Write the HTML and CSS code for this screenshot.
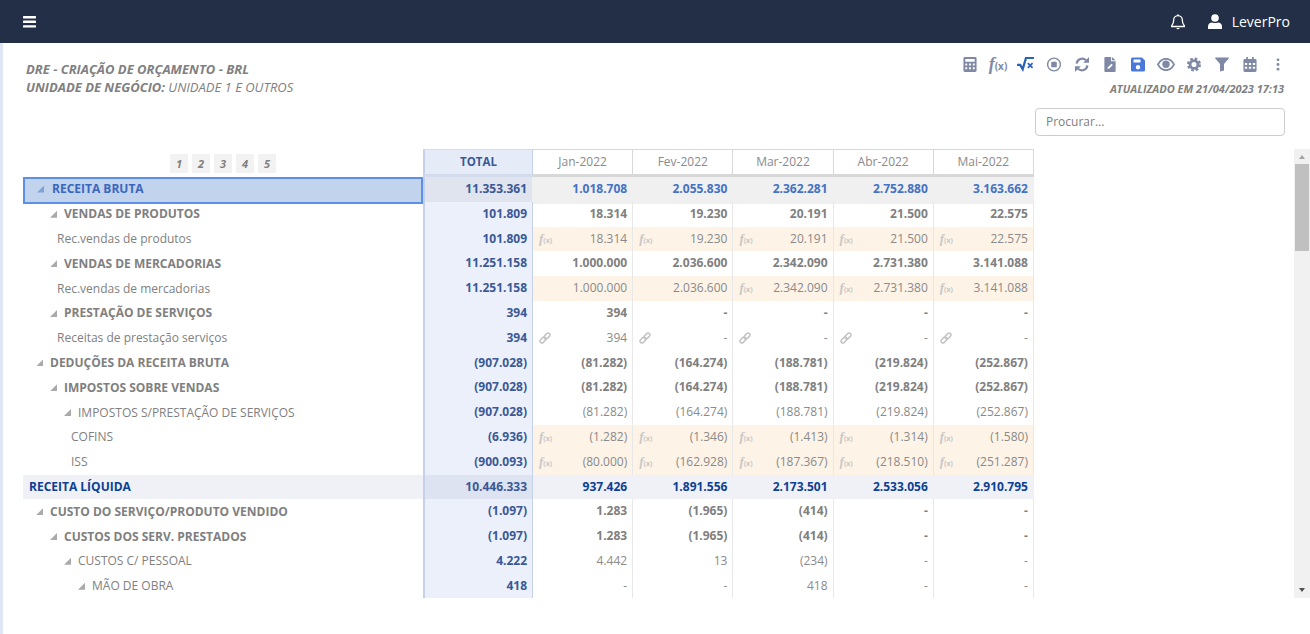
FILE: index.html
```html
<!DOCTYPE html>
<html lang="pt-BR">
<head>
<meta charset="utf-8">
<title>DRE - Criação de orçamento</title>
<link rel="stylesheet" href="styles.css">
</head>
<body>
<header class="topbar">
  <svg class="menu" viewBox="0 0 14 12" width="14" height="12"><g fill="#fff"><rect y="0" width="13" height="2.4" rx=".6"/><rect y="4.6" width="13" height="2.4" rx=".6"/><rect y="9.2" width="13" height="2.4" rx=".6"/></g></svg>
  <div class="top-right">
    <svg class="bell" viewBox="0 0 14 16" width="14" height="16"><path d="M7 1.6c-2.6 0-4.3 2-4.3 4.4 0 3.4-1.2 4.6-2 5.6v.9h12.6v-.9c-.8-1-2-2.2-2-5.6C11.3 3.600 9.600 1.600 7 1.600z" fill="none" stroke="#fff" stroke-width="1.3"/><path d="M5.300 14a1.800 1.800 0 0 0 3.400 0z" fill="#fff"/><rect x="6.200" y=".2" width="1.600" height="2" rx=".8" fill="#fff"/></svg>
    <svg class="user" viewBox="0 0 14 15" width="14" height="15"><circle cx="7" cy="4" r="3.800" fill="#fff"/><path d="M0 15v-2.500C0 9.800 2 8.400 4 8.400c1 .5 2 .7 3 .7s2-.2 3-.7c2 0 4 1.400 4 4.100V15z" fill="#fff"/></svg>
    <span class="username">LeverPro</span>
  </div>
</header>
<main class="page">
  <section class="head">
    <div class="titles">
      <div class="title-line"><b>DRE - CRIAÇÃO DE ORÇAMENTO - BRL</b></div>
      <div class="title-line"><b>UNIDADE DE NEGÓCIO:</b> UNIDADE 1 E OUTROS</div>
    </div>
    <div class="tools">
      <div class="icons">
        <svg class="ico" viewBox="0 0 14 16"><path fill-rule="evenodd" d="M1.500 0h11A1.500 1.500 0 0 1 14 1.500v13a1.500 1.500 0 0 1-1.500 1.500h-11A1.500 1.500 0 0 1 0 14.500v-13A1.500 1.500 0 0 1 1.500 0zM2 2v3h10V2zM2 7v2h2V7zm4 0v2h2V7zm4 0v2h2V7zM2 11v2h2v-2zm4 0v2h2v-2zm4 0v2h2v-2z"/></svg>
        <span class="fx-tool">f<small>(x)</small></span>
        <svg class="ico wide blue" viewBox="0 0 19 16"><path d="M0 8.500h3.300l2.700 4.500L9.500 1H18" fill="none" stroke="#2a62b8" stroke-width="2.400"/><path d="M11.500 6.500l5 5m0-5l-5 5" stroke="#2a62b8" stroke-width="1.800"/></svg>
        <svg class="ico wide" viewBox="0 0 16 16"><circle cx="8" cy="8" r="6.800" fill="none" stroke-width="1.500" stroke="#7f88a5"/><rect x="5" y="5" width="6" height="6" rx="1"/></svg>
        <svg class="ico wide" viewBox="0 0 16 16"><path d="M2.300 7A5.800 5.800 0 0 1 12.300 3.600M13.700 9A5.800 5.800 0 0 1 3.700 12.400" fill="none" stroke="#7f88a5" stroke-width="2.300"/><path d="M15.500 0v6.200H9.300zM.5 16V9.800h6.200z"/></svg>
        <svg class="ico" viewBox="0 0 12 16"><path d="M0 1a1 1 0 0 1 1-1h6v4.500h5V15a1 1 0 0 1-1 1H1a1 1 0 0 1-1-1z"/><path d="M8 0l4 3.500H8z"/><path d="M3.300 12.800l.5-2 3.700-3.700 1.500 1.500-3.700 3.700z" fill="#fff"/></svg>
        <svg class="ico" viewBox="0 0 14 14"><path fill="#4a78db" fill-rule="evenodd" d="M1.500 0H11l3 3v9.500a1.500 1.500 0 0 1-1.500 1.500h-11A1.500 1.500 0 0 1 0 12.500v-11A1.500 1.500 0 0 1 1.500 0zM2.500 2v3h7V2zM7 7.500a2.200 2.200 0 1 0 0 4.400 2.200 2.200 0 0 0 0-4.400z"/></svg>
        <svg class="ico wide" viewBox="0 0 18 13"><path fill-rule="evenodd" d="M9 0c4 0 7.300 2.700 9 6.500-1.700 3.800-5 6.500-9 6.500S1.700 10.300 0 6.500C1.700 2.700 5 0 9 0zm0 1.800C6 1.800 3.500 3.600 2 6.500c1.500 2.900 4 4.700 7 4.700s5.500-1.800 7-4.700c-1.500-2.900-4-4.700-7-4.700z"/><circle cx="9" cy="6.300" r="3.700"/></svg>
        <svg class="ico" viewBox="0 0 16 16"><circle cx="8" cy="8" r="4.500" fill="none" stroke="#7f88a5" stroke-width="3.200"/><circle cx="8" cy="8" r="6.700" fill="none" stroke="#7f88a5" stroke-width="2.600" stroke-dasharray="3 2.260"/></svg>
        <svg class="ico" viewBox="0 0 14 14"><path d="M.5 0h13a.5.500 0 0 1 .4.800L9 6.500V13l-4 1V6.500L.1.800A.5.500 0 0 1 .5 0z"/></svg>
        <svg class="ico" viewBox="0 0 14 16"><path fill-rule="evenodd" d="M3 0h1.800v2h4.400V0H11v2h1.500A1.500 1.500 0 0 1 14 3.500v11a1.500 1.500 0 0 1-1.500 1.500h-11A1.500 1.500 0 0 1 0 14.500v-11A1.500 1.500 0 0 1 1.500 2H3zM1.500 6.500v2h2.500v-2zm4.300 0v2h2.400v-2zm4.200 0v2h2.500v-2zM1.500 10.500v2h2.500v-2zm4.300 0v2h2.400v-2zm4.200 0v2h2.500v-2z"/></svg>
        <svg class="ico dots" viewBox="0 0 4 14"><circle cx="2" cy="2" r="1.500"/><circle cx="2" cy="7" r="1.500"/><circle cx="2" cy="12" r="1.500"/></svg>
      </div>
      <div class="updated">ATUALIZADO EM 21/04/2023 17:13</div>
    </div>
  </section>
  <div class="search-row"><input class="search" type="text" placeholder="Procurar..."></div>
  <section class="report">
    <div class="sheet">
      <div class="row row-head">
        <div class="levels"><span class="lvl">1</span><span class="lvl">2</span><span class="lvl">3</span><span class="lvl">4</span><span class="lvl">5</span></div>
        <div class="cell total">TOTAL</div>
        <div class="cell month">Jan-2022</div><div class="cell month">Fev-2022</div><div class="cell month">Mar-2022</div><div class="cell month">Abr-2022</div><div class="cell month">Mai-2022</div>
      </div>
      <div class="rows">
        <div class="row bold row-first">
          <div class="label sel i1"><i class="arrow"></i>RECEITA BRUTA</div>
          <div class="cell total">11.353.361</div><div class="cell">1.018.708</div><div class="cell">2.055.830</div><div class="cell">2.362.281</div><div class="cell">2.752.880</div><div class="cell">3.163.662</div>
        </div>
        <div class="row bold">
          <div class="label i2"><i class="arrow"></i>VENDAS DE PRODUTOS</div>
          <div class="cell total">101.809</div><div class="cell">18.314</div><div class="cell">19.230</div><div class="cell">20.191</div><div class="cell">21.500</div><div class="cell">22.575</div>
        </div>
        <div class="row">
          <div class="label leaf1">Rec.vendas de produtos</div>
          <div class="cell total">101.809</div><div class="cell inp"><span class="fx">f<small>(x)</small></span>18.314</div><div class="cell inp"><span class="fx">f<small>(x)</small></span>19.230</div><div class="cell inp"><span class="fx">f<small>(x)</small></span>20.191</div><div class="cell inp"><span class="fx">f<small>(x)</small></span>21.500</div><div class="cell inp"><span class="fx">f<small>(x)</small></span>22.575</div>
        </div>
        <div class="row bold">
          <div class="label i2"><i class="arrow"></i>VENDAS DE MERCADORIAS</div>
          <div class="cell total">11.251.158</div><div class="cell">1.000.000</div><div class="cell">2.036.600</div><div class="cell">2.342.090</div><div class="cell">2.731.380</div><div class="cell">3.141.088</div>
        </div>
        <div class="row">
          <div class="label leaf1">Rec.vendas de mercadorias</div>
          <div class="cell total">11.251.158</div><div class="cell inp">1.000.000</div><div class="cell inp">2.036.600</div><div class="cell inp"><span class="fx">f<small>(x)</small></span>2.342.090</div><div class="cell inp"><span class="fx">f<small>(x)</small></span>2.731.380</div><div class="cell inp"><span class="fx">f<small>(x)</small></span>3.141.088</div>
        </div>
        <div class="row bold">
          <div class="label i2"><i class="arrow"></i>PRESTAÇÃO DE SERVIÇOS</div>
          <div class="cell total">394</div><div class="cell">394</div><div class="cell">-</div><div class="cell">-</div><div class="cell">-</div><div class="cell">-</div>
        </div>
        <div class="row">
          <div class="label leaf1">Receitas de prestação serviços</div>
          <div class="cell total">394</div>
          <div class="cell"><svg class="link" viewBox="0 0 12 12"><use href="#chain"/></svg>394</div>
          <div class="cell"><svg class="link" viewBox="0 0 12 12"><use href="#chain"/></svg>-</div>
          <div class="cell"><svg class="link" viewBox="0 0 12 12"><use href="#chain"/></svg>-</div>
          <div class="cell"><svg class="link" viewBox="0 0 12 12"><use href="#chain"/></svg>-</div>
          <div class="cell"><svg class="link" viewBox="0 0 12 12"><use href="#chain"/></svg>-</div>
        </div>
        <div class="row bold">
          <div class="label i1b"><i class="arrow"></i>DEDUÇÕES DA RECEITA BRUTA</div>
          <div class="cell total">(907.028)</div><div class="cell">(81.282)</div><div class="cell">(164.274)</div><div class="cell">(188.781)</div><div class="cell">(219.824)</div><div class="cell">(252.867)</div>
        </div>
        <div class="row bold">
          <div class="label i2"><i class="arrow"></i>IMPOSTOS SOBRE VENDAS</div>
          <div class="cell total">(907.028)</div><div class="cell">(81.282)</div><div class="cell">(164.274)</div><div class="cell">(188.781)</div><div class="cell">(219.824)</div><div class="cell">(252.867)</div>
        </div>
        <div class="row">
          <div class="label i3"><i class="arrow"></i>IMPOSTOS S/PRESTAÇÃO DE SERVIÇOS</div>
          <div class="cell total">(907.028)</div><div class="cell">(81.282)</div><div class="cell">(164.274)</div><div class="cell">(188.781)</div><div class="cell">(219.824)</div><div class="cell">(252.867)</div>
        </div>
        <div class="row">
          <div class="label leaf2">COFINS</div>
          <div class="cell total">(6.936)</div><div class="cell inp"><span class="fx">f<small>(x)</small></span>(1.282)</div><div class="cell inp"><span class="fx">f<small>(x)</small></span>(1.346)</div><div class="cell inp"><span class="fx">f<small>(x)</small></span>(1.413)</div><div class="cell inp"><span class="fx">f<small>(x)</small></span>(1.314)</div><div class="cell inp"><span class="fx">f<small>(x)</small></span>(1.580)</div>
        </div>
        <div class="row">
          <div class="label leaf2">ISS</div>
          <div class="cell total">(900.093)</div><div class="cell inp"><span class="fx">f<small>(x)</small></span>(80.000)</div><div class="cell inp"><span class="fx">f<small>(x)</small></span>(162.928)</div><div class="cell inp"><span class="fx">f<small>(x)</small></span>(187.367)</div><div class="cell inp"><span class="fx">f<small>(x)</small></span>(218.510)</div><div class="cell inp"><span class="fx">f<small>(x)</small></span>(251.287)</div>
        </div>
        <div class="row bold row-sum">
          <div class="label i0">RECEITA LÍQUIDA</div>
          <div class="cell total">10.446.333</div><div class="cell">937.426</div><div class="cell">1.891.556</div><div class="cell">2.173.501</div><div class="cell">2.533.056</div><div class="cell">2.910.795</div>
        </div>
        <div class="row bold">
          <div class="label i1b"><i class="arrow"></i>CUSTO DO SERVIÇO/PRODUTO VENDIDO</div>
          <div class="cell total">(1.097)</div><div class="cell">1.283</div><div class="cell">(1.965)</div><div class="cell">(414)</div><div class="cell">-</div><div class="cell">-</div>
        </div>
        <div class="row bold">
          <div class="label i2"><i class="arrow"></i>CUSTOS DOS SERV. PRESTADOS</div>
          <div class="cell total">(1.097)</div><div class="cell">1.283</div><div class="cell">(1.965)</div><div class="cell">(414)</div><div class="cell">-</div><div class="cell">-</div>
        </div>
        <div class="row">
          <div class="label i3"><i class="arrow"></i>CUSTOS C/ PESSOAL</div>
          <div class="cell total">4.222</div><div class="cell">4.442</div><div class="cell">13</div><div class="cell">(234)</div><div class="cell">-</div><div class="cell">-</div>
        </div>
        <div class="row">
          <div class="label i4"><i class="arrow"></i>MÃO DE OBRA</div>
          <div class="cell total">418</div><div class="cell">-</div><div class="cell">-</div><div class="cell">418</div><div class="cell">-</div><div class="cell">-</div>
        </div>
      </div>
    </div>
    <div class="scrollbar">
      <span class="arrow-up"></span>
      <span class="thumb"></span>
      <span class="track"></span>
      <span class="arrow-down"></span>
    </div>
  </section>
</main>
<svg class="defs" width="0" height="0"><defs><g id="chain" fill="none" stroke="#c4c4c4" stroke-width="1.500"><rect x="-3.400" y="-1.900" width="6.800" height="3.800" rx="1.900" transform="translate(4 8) rotate(-45)"/><rect x="-3.400" y="-1.900" width="6.800" height="3.800" rx="1.900" transform="translate(8 4) rotate(-45)"/></g></defs></svg>
</body>
</html>
```
FILE: styles.css
```css
* { box-sizing: border-box; }
html, body { margin: 0; height: 100%; overflow: hidden; background: #fff; }
body { font-family: "Open Sans", "Liberation Sans", sans-serif; font-size: 12px; color: #808080; }

.topbar { height: 43px; background: #232f46; display: flex; align-items: center; justify-content: space-between; padding: 0 20px 0 23px; }
.menu { display: block; }
.top-right { display: flex; align-items: center; }
.bell { margin-right: 23px; }
.user { margin-right: 10px; }
.username { color: #fff; font-size: 14px; }

.page { height: 591px; border-left: 3px solid #dfe6f5; padding-left: 20px; }
.head { display: flex; justify-content: space-between; padding: 12px 18px 0 3px; height: 65px; }
.titles { padding-top: 5px; }
.title-line { font-size: 13px; font-style: italic; line-height: 18px; color: #808080; }
.title-line b { font-weight: 700; }
.tools { display: flex; flex-direction: column; align-items: flex-end; }
.icons { display: flex; height: 18px; align-items: center; }
.ico { width: 14px; height: 15px; margin: 0 7px; fill: #7f88a5; display: block; }
.ico.wide { width: 18px; margin: 0 5px; }
.ico.dots { width: 4px; height: 13px; margin: 0 12px; }
.fx-tool { width: 28px; text-align: center; color: #7f88a5; font: italic 700 18px/18px "Liberation Serif", serif; }
.fx-tool small { font: 700 10px "Open Sans", sans-serif; }
.updated { font-size: 11px; font-weight: 700; font-style: italic; color: #808080; margin: 9px 8px 0 0; line-height: 14px; }

.search-row { display: flex; justify-content: flex-end; padding-right: 25px; }
.search { width: 250px; height: 28px; border: 1px solid #ccc; border-radius: 4px; padding: 0 10px 2px; font: 12px "Open Sans", sans-serif; color: #777; outline: none; }
.search::placeholder { color: #808080; opacity: 1; }

.report { display: flex; justify-content: space-between; margin-top: 13px; height: 449px; }
.sheet { width: 1011px; }
.row { display: grid; grid-template-columns: 400px 110px repeat(5, 100.2px); height: 24.8px; }
.rows { height: 421px; overflow: hidden; }
.row-head { height: 28px; }
.levels { display: flex; justify-content: center; align-items: center; gap: 4px; }
.lvl { width: 18px; height: 19px; background: #f2f2f2; text-align: center; font-style: italic; font-weight: 700; font-size: 11px; line-height: 19px; color: #808080; }

.cell { text-align: right; padding-right: 5px; line-height: 24px; border-right: 1px solid #e8e8e8; position: relative; white-space: nowrap; }
.label { line-height: 24px; white-space: nowrap; color: #808080; display: flex; align-items: center; }
.bold .label, .bold .cell { font-weight: 700; }

.row-head .cell { text-align: center; padding: 0; line-height: 23px; border-top: 1px solid #d8d8d8; border-right: 1px solid #d8d8d8; border-bottom: 3px solid #d8d8d8; color: #808080; }
.row-head .total { background: #e6ecf7; color: #3b5896; font-weight: 700; font-size: 11.500px; border-top: 1px solid #d3dcec; border-bottom: 3px solid #d3dcec; border-right-color: #d3dcec; }

.cell.total { background: #ebf0fa; color: #3b5896; font-weight: 700; border-left: 2px solid #c5d1e8; border-right: 1px solid #c5d1e8; }
.row-head .cell.total { padding: 0; background: #e6ecf7; }

.inp { background: #fdf3e7; color: #8a8a8a; }
.row:not(.bold) .cell:not(.total) { color: #8a8a8a; }
.fx { position: absolute; left: 6px; top: 0; color: #c8c8c8; font: italic 700 13px/24px "Liberation Serif", serif; }
.fx small { font: 700 7px "Open Sans", sans-serif; }
.link { position: absolute; left: 6px; top: 6px; width: 12px; height: 12px; }

.arrow { width: 7px; height: 7px; background: #aaa; clip-path: polygon(100% 0, 100% 100%, 0 100%); margin-right: 7px; flex: none; }
.i0 { padding-left: 6px; color: #0d3f94; }
.row-sum .label.i0 { color: #0d3f94; }
.i1 { padding-left: 12px; }
.i1 .arrow { margin-right: 8px; background: #7ea3d6; }
.i1b { padding-left: 13px; }
.i2 { padding-left: 27px; }
.i3 { padding-left: 41px; }
.i4 { padding-left: 55px; }
.leaf1 { padding-left: 34px; }
.leaf2 { padding-left: 48px; }

.label.sel { background: #c2d4ed; border: 2px solid #5b8fe8; color: #3a66c0; padding-bottom: 3px; line-height: 20px; }
.row-first .cell { background: #f0f0f0; color: #4472c4; border-right-color: #f0f0f0; line-height: 23px; }
.row-first .cell.total { background: #dfe4ee; color: #3b5896; }
.row-sum { background: #eff1f6; }
.row-sum .cell { color: #0d3f94; border-right-color: #eff1f6; }
.row-sum .cell.total { background: #dde3f0; color: #3b5896; border-right-color: #c5d1e8; }

.scrollbar { width: 16px; height: 449px; background: #f1f1f1; display: flex; flex-direction: column; align-items: center; }
.arrow-up, .arrow-down { width: 0; height: 0; border-left: 3px solid transparent; border-right: 3px solid transparent; flex: none; }
.arrow-up { border-bottom: 4px solid #a3a3a3; margin: 6px 0 5px; }
.arrow-down { border-top: 4px solid #505050; margin: 6px 0; }
.thumb { width: 14px; height: 87px; background: #c0c0c0; flex: none; }
.track { flex: 1; }
.defs { position: absolute; }
```
